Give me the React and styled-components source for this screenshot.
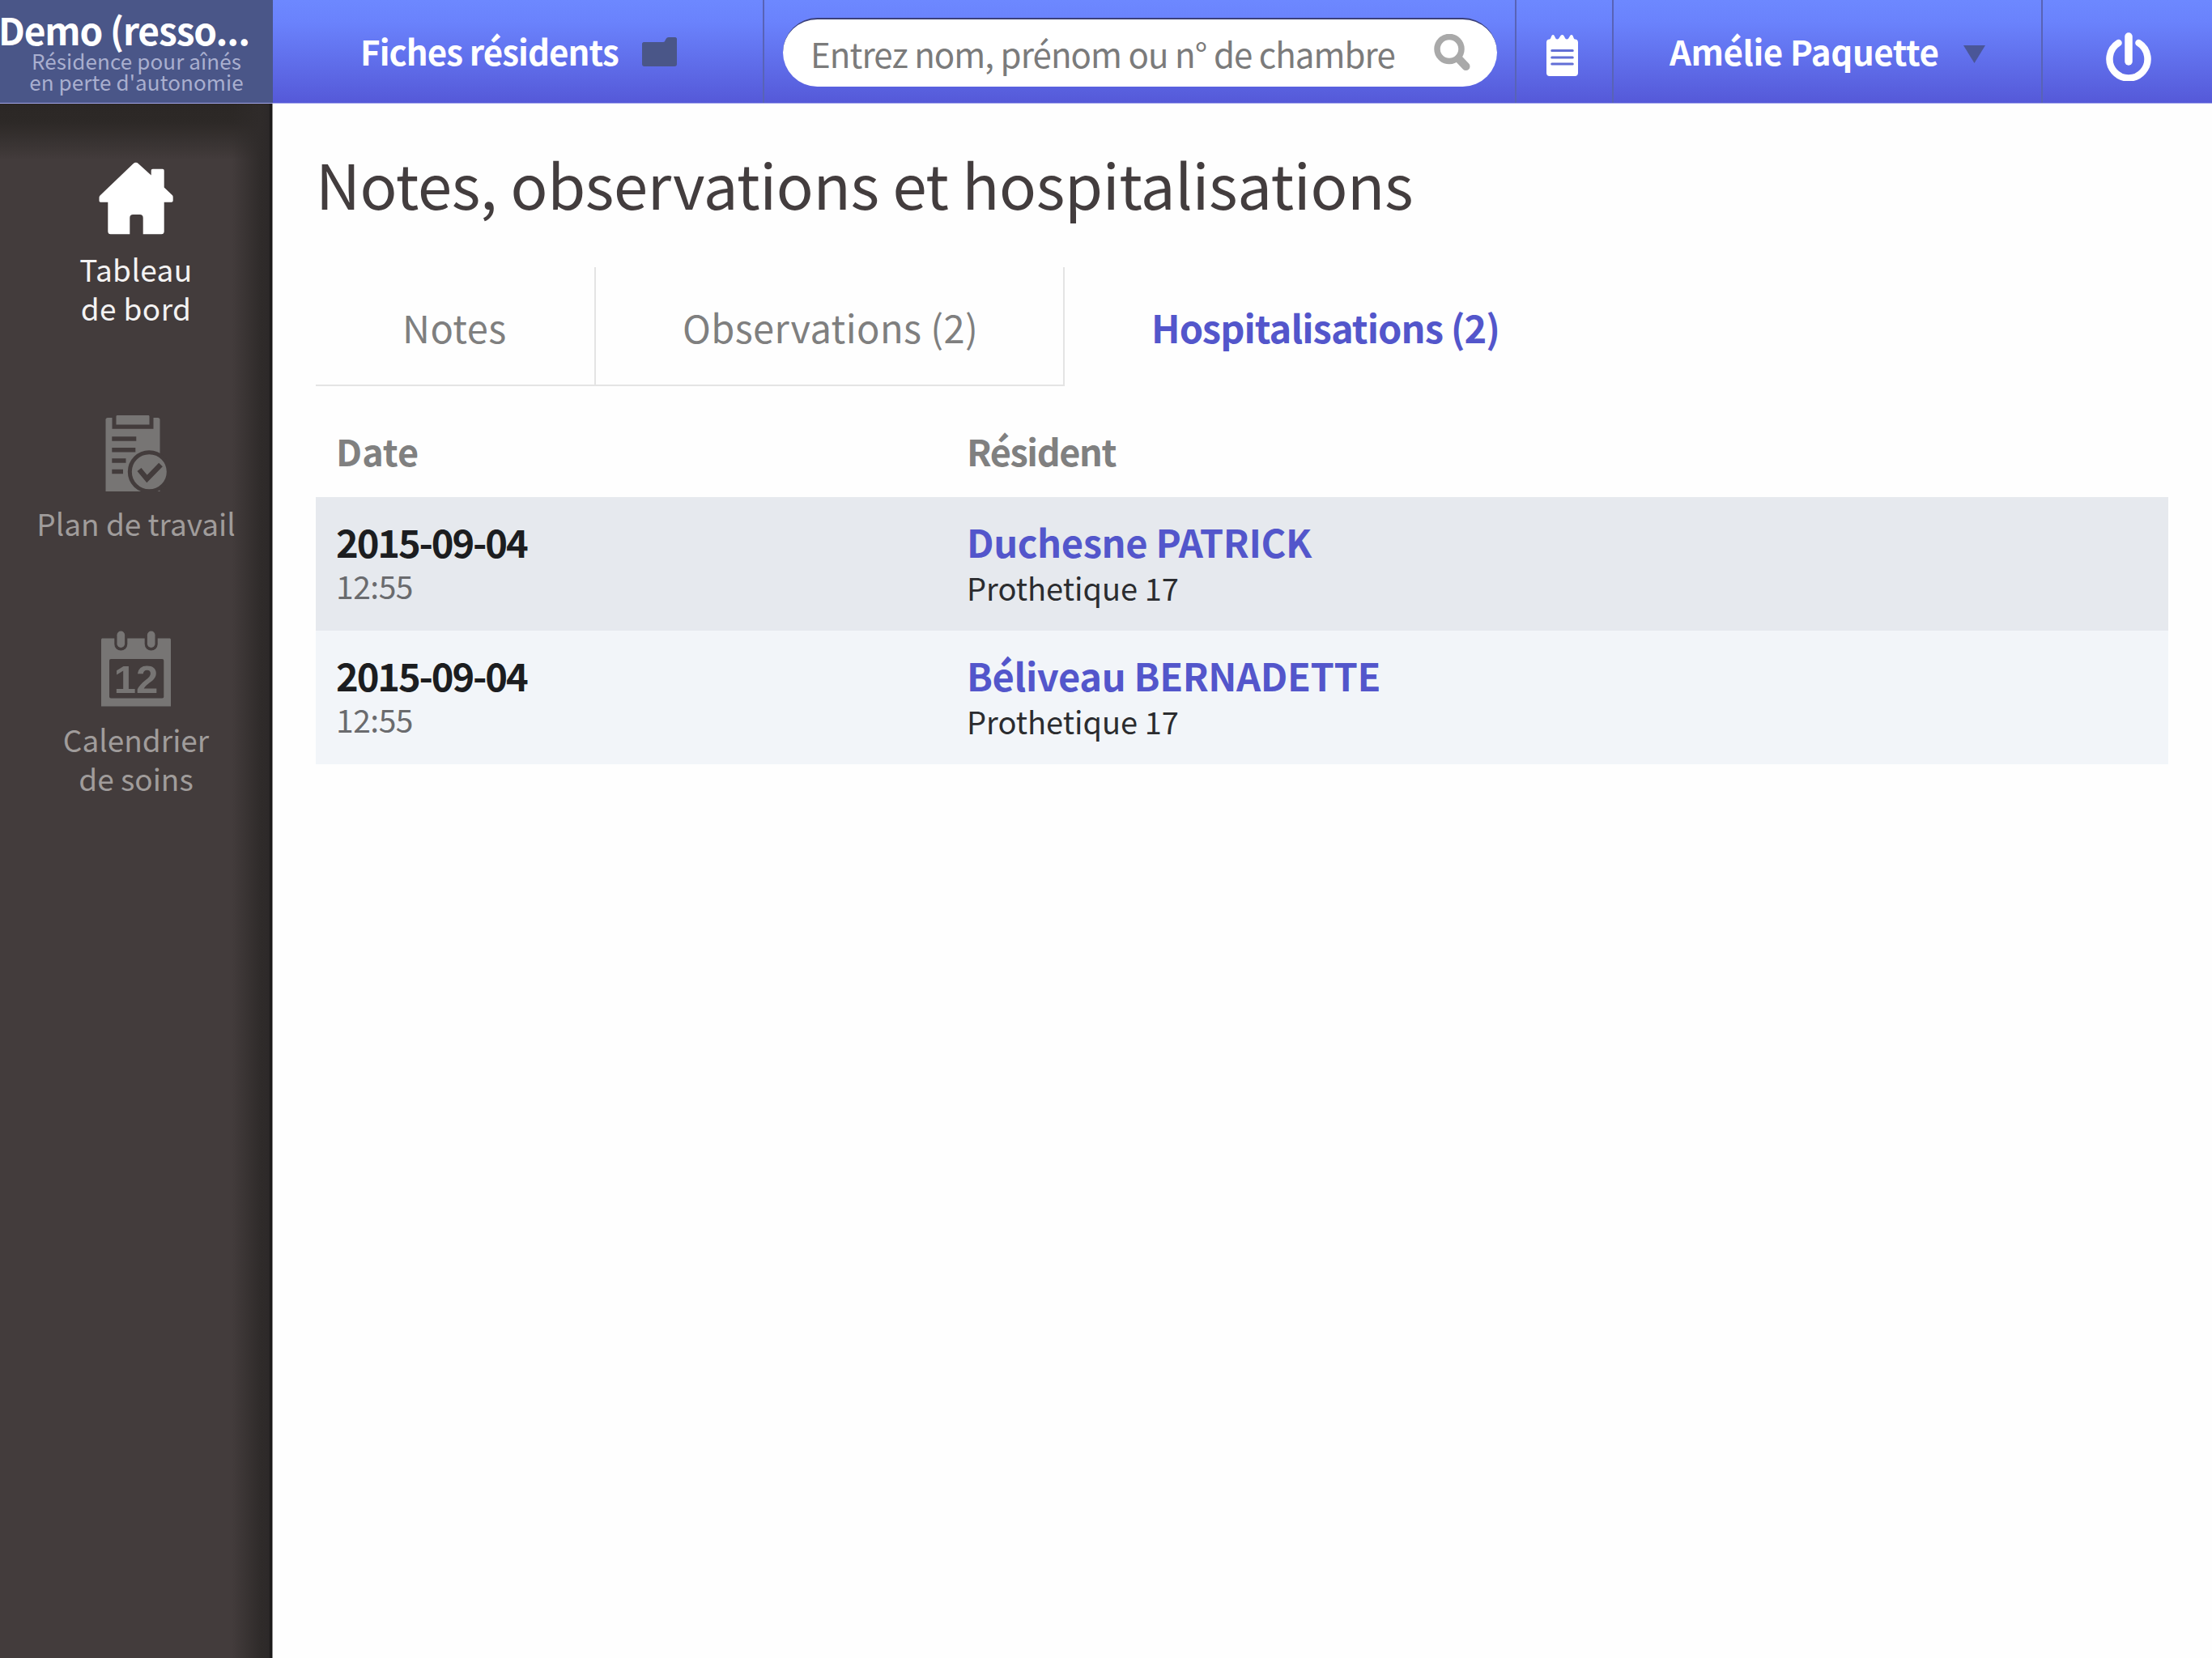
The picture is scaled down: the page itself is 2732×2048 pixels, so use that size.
import React, { useState } from 'react';
import styled, { createGlobalStyle } from 'styled-components';

const GlobalStyle = createGlobalStyle`
  * {
    box-sizing: border-box;
  }

  body {
    margin: 0;
    background: #fefefe;
    font-family: 'Noto Sans CJK JP', 'Noto Sans', sans-serif;
  }
`;

const Page = styled.div`
  display: flex;
  flex-direction: column;
  height: 2048px;
  overflow: hidden;
`;

const Header = styled.header`
  display: flex;
  flex: none;
  height: 128px;
  border-bottom: 1px solid #a3a6ea;
  background: linear-gradient(#6d88ff, #6a82fc 22%, #5559d8);
`;

const Brand = styled.div`
  width: 337px;
  padding-top: 12px;
  background: #4a5688;
`;

const BrandName = styled.div`
  margin-left: -2px;
  color: #fff;
  font-size: 46px;
  font-weight: 700;
  line-height: 48px;
  letter-spacing: -1.1px;
  white-space: nowrap;
`;

const BrandInfo = styled.div`
  margin-top: 2px;
  color: #a9afcf;
  font-size: 26px;
  line-height: 26px;
  letter-spacing: 0.1px;
  text-align: center;
`;

const HeaderCell = styled.div`
  display: flex;
  align-items: center;
  width: ${(props) => props.$width};
  padding-top: ${(props) => props.$top || 0};
  padding-left: ${(props) => props.$left || 0};
  border-right: ${(props) => (props.$last ? 'none' : '2px solid #5863b6')};
`;

const HeaderLink = styled.a`
  margin-bottom: 2px;
  color: #fff;
  font-size: 42px;
  font-weight: 700;
  line-height: 60px;
  letter-spacing: ${(props) => props.$spacing};
  white-space: nowrap;
`;

const Search = styled.label`
  display: flex;
  align-items: center;
  justify-content: space-between;
  width: 882px;
  height: 85px;
  margin-top: 1px;
  padding: 0 32px 0 34px;
  border-top: 2px solid #3b4079;
  border-radius: 43px;
  background: #fff;
`;

const SearchInput = styled.input`
  flex: 1;
  min-width: 0;
  height: 60px;
  padding: 0;
  border: none;
  outline: none;
  background: none;
  font-family: inherit;
  font-size: 42px;
  letter-spacing: -0.93px;

  &::placeholder {
    color: #7b7b7b;
    opacity: 1;
  }
`;

const Body = styled.div`
  display: flex;
  flex: 1;
`;

const Sidebar = styled.nav`
  display: flex;
  flex-direction: column;
  align-items: center;
  gap: 109px;
  width: 337px;
  padding-top: 72px;
  border-right: 1px solid #8d8b8b;
  background:
    linear-gradient(to left, #1c1a1a 2px, #2d2929 4px, #2f2b2a 14px, rgba(47, 43, 42, 0) 50px),
    linear-gradient(#2b2725, #2d2927 24px, rgba(45, 41, 39, 0) 70px),
    #433c3c;
`;

const SidebarItem = styled.a`
  display: flex;
  flex-direction: column;
  align-items: center;
  gap: ${(props) => props.$gap};
  color: ${(props) => (props.$active ? '#fff' : '#777574')};
`;

const SidebarLabel = styled.span`
  color: ${(props) => (props.$active ? '#f4f3f3' : '#a09c9b')};
  font-size: 37px;
  line-height: 48px;
  letter-spacing: ${(props) => (props.$active ? '0.4px' : '0')};
  text-align: center;
  white-space: pre-line;
`;

const Main = styled.main`
  flex: 1;
  padding: 52px 54px 0 53px;
`;

const Title = styled.h1`
  margin: 0;
  color: #433d3e;
  font-size: 76px;
  font-weight: 400;
  line-height: 92px;
  letter-spacing: -0.35px;
`;

const Tabs = styled.div`
  display: flex;
  height: 147px;
  margin-top: 58px;
`;

const Tab = styled.button`
  display: flex;
  align-items: center;
  width: ${(props) => props.$width};
  padding: 2px 0 0 107px;
  border: solid #e4e4e4;
  border-width: ${(props) => (props.$active ? '0 0 2px' : '0 2px 2px 0')};
  border-bottom-color: ${(props) => (props.$active ? 'transparent' : '#e4e4e4')};
  background: none;
  color: ${(props) => (props.$active ? '#5356cb' : '#7f7f7f')};
  font-family: inherit;
  font-size: 47px;
  font-weight: ${(props) => (props.$active ? 700 : 400)};
  line-height: 60px;
  letter-spacing: ${(props) => (props.$active ? '-0.95px' : '0.4px')};
  white-space: nowrap;
`;

const TableHead = styled.div`
  display: grid;
  grid-template-columns: 779px 1fr;
  height: 137px;
  padding: 45px 0 0 25px;
  color: #808080;
  font-size: 45px;
  font-weight: 700;
  line-height: 70px;
`;

const HeadCell = styled.div`
  letter-spacing: ${(props) => (props.$tight ? '-1.4px' : '0')};
`;

const Row = styled.div`
  display: grid;
  grid-template-columns: 779px 1fr;
  height: 165px;
  padding: 25px 0 0 25px;
  background: #e6e9ee;

  &:nth-child(odd) {
    background: #f2f5f9;
  }
`;

const RowDate = styled.div`
  color: #1c1d20;
  font-size: 47px;
  font-weight: 700;
  line-height: 60px;
  letter-spacing: -2.1px;
`;

const RowTime = styled.div`
  color: #6a6b6e;
  font-size: 39px;
  line-height: 48px;
  letter-spacing: -0.5px;
`;

const RowName = styled.div`
  color: #5356cb;
  font-size: 47px;
  font-weight: 700;
  line-height: 60px;
  letter-spacing: -0.4px;
`;

const RowRoom = styled.div`
  padding-top: 3px;
  color: #2b2c2f;
  font-size: 38px;
  line-height: 48px;
`;

const FolderIcon = () => (
  <svg width="43" height="36" viewBox="0 0 43 36">
    <path d="M2 6h24c2 0 2-1 3-3s2-3 4-3h8c1 0 2 1 2 2v31c0 2-1 3-3 3H3c-2 0-3-1-3-3V8c0-1 1-2 2-2z" fill="#4a5688" />
  </svg>
);

const SearchIcon = () => (
  <svg width="46" height="46" viewBox="0 0 46 46" fill="none" stroke="#a9a9a9">
    <circle cx="19" cy="18.5" r="15" strokeWidth="7.5" />
    <path d="M31 31l8.500 9" strokeWidth="10" strokeLinecap="round" />
  </svg>
);

const NotepadIcon = () => (
  <svg width="39" height="51" viewBox="0 0 41 51" preserveAspectRatio="none">
    <path
      d="M4 5.500C6 5.500 6 0 8.500 0S11 5.500 14 5.500 17.500 0 20.500 0 23.500 5.500 26.500 5.500 30 0 32.500 0 35 5.500 37 5.500c2.500 0 4 1.500 4 4V47c0 2.500-1.500 4-4 4H4c-2.500 0-4-1.500-4-4V9.500c0-2.500 1.500-4 4-4z"
      fill="#fff"
    />
    <path d="M7 19.500h27M7 28h27M7 36h27" stroke="#626fd6" strokeWidth="3" strokeLinecap="round" />
  </svg>
);

const ArrowIcon = () => (
  <svg width="27" height="22" viewBox="0 0 27 22">
    <path d="M0 0h27L13.500 22z" fill="#4a5698" />
  </svg>
);

const PowerIcon = () => (
  <svg width="56" height="60" viewBox="0 0 56 60" fill="none" stroke="#fff" strokeLinecap="round">
    <path d="M15.500 13A23.500 23.500 0 1 0 40.500 13" strokeWidth="8.500" />
    <path d="M28 5v31" strokeWidth="9.500" />
  </svg>
);

const HomeIcon = () => (
  <svg width="92" height="90" viewBox="0 0 92 90">
    <path
      d="M42.500 2.200C44.500.3 47 .3 49 2.200L64.700 16.500V11c0-1.500.7-2.200 2-2.200h12c1.300 0 2 .7 2 2.200v20.500l10 9.500c.8.800 1 1.500 1 2.500v4c0 1.500-.8 2.200-2 2.200h-9V86c0 2-1.300 3.300-3.300 3.300H54.700V69c0-2.500-1.500-4-4-4h-8.400c-2.500 0-4 1.500-4 4v20.300H14.600c-2 0-3.300-1.300-3.300-3.300V49.700h-9C1 49.700.5 49 .5 47.500v-3c0-1.200.3-2.200 1.300-3.200z"
      fill="currentColor"
    />
  </svg>
);

const PlanIcon = () => (
  <svg width="76" height="95" viewBox="0 0 76 95" fill="none" stroke="#433c3c">
    <path d="M3 3h62c1.500 0 2.500 1 2.500 2.500V94H.5V5.500C.5 4 1.500 3 3 3z" fill="currentColor" stroke="none" />
    <path d="M8.500 0h51v16.700h-51z" fill="#433c3c" stroke="none" />
    <path d="M15 0h38c1 0 1.500.5 1.500 1.500v10h-41v-10C13.500.5 14 0 15 0z" fill="currentColor" stroke="none" />
    <path d="M8.300 29h30M8.300 42.700h29M8.300 56h17.200M8.300 69.500H22" strokeWidth="5.500" />
    <circle cx="54.300" cy="69.700" r="24" fill="currentColor" strokeWidth="5" />
    <path d="M42 67l9.500 11.500L68.500 61" strokeWidth="6.500" />
  </svg>
);

const CalendarIcon = () => (
  <svg width="86" height="94" viewBox="0 0 86 94" fill="currentColor">
    <path d="M2 9.500h82c1.500 0 2 .5 2 2v82H0v-82c0-1.500.5-2 2-2z" />
    <rect x="16.300" y="-4" width="16" height="28.500" rx="8" fill="#433c3c" />
    <rect x="53.700" y="-4" width="16" height="28.500" rx="8" fill="#433c3c" />
    <rect x="19.500" y="0.500" width="9.600" height="20.500" rx="4.800" />
    <rect x="56.900" y="0.500" width="9.600" height="20.500" rx="4.800" />
    <rect x="10" y="35" width="67.300" height="48.500" rx="2" fill="#433c3c" />
    <text x="43" y="77.300" textAnchor="middle" fontFamily="'Liberation Sans', sans-serif" fontWeight="700" fontSize="49">
      12
    </text>
  </svg>
);

const menu = [
  { label: 'Tableau\nde bord', icon: HomeIcon, gap: '18px', active: true },
  { label: 'Plan de travail', icon: PlanIcon, gap: '14px' },
  { label: 'Calendrier\nde soins', icon: CalendarIcon, gap: '16px' },
];

const tabs = [
  { id: 'notes', label: 'Notes', width: '346px' },
  { id: 'observations', label: 'Observations (2)', width: '579px' },
  { id: 'hospitalisations', label: 'Hospitalisations (2)', width: '640px' },
];

const rows = [
  { date: '2015-09-04', time: '12:55', name: 'Duchesne PATRICK', room: 'Prothetique 17' },
  { date: '2015-09-04', time: '12:55', name: 'Béliveau BERNADETTE', room: 'Prothetique 17' },
];

const App = () => {
  const [tab, setTab] = useState('hospitalisations');

  return (
    <Page>
      <GlobalStyle />
      <Header>
        <Brand>
          <BrandName>Demo (resso...</BrandName>
          <BrandInfo>
            Résidence pour aînés
            <br />
            en perte d'autonomie
          </BrandInfo>
        </Brand>
        <HeaderCell $width="607px" $left="108px">
          <HeaderLink $spacing="-0.9px">Fiches résidents</HeaderLink>
          <HeaderCell $left="29px" $last>
            <FolderIcon />
          </HeaderCell>
        </HeaderCell>
        <HeaderCell $width="929px" $left="23px">
          <Search>
            <SearchInput placeholder="Entrez nom, prénom ou n° de chambre" />
            <SearchIcon />
          </Search>
        </HeaderCell>
        <HeaderCell $width="120px" $left="37px" $top="10px">
          <NotepadIcon />
        </HeaderCell>
        <HeaderCell $width="530px" $left="69px">
          <HeaderLink $spacing="-0.4px">Amélie Paquette</HeaderLink>
          <HeaderCell $left="30px" $top="6px" $last>
            <ArrowIcon />
          </HeaderCell>
        </HeaderCell>
        <HeaderCell $width="209px" $left="78px" $top="12px" $last>
          <PowerIcon />
        </HeaderCell>
      </Header>
      <Body>
        <Sidebar>
          {menu.map(({ label, icon: Icon, gap, active }) => (
            <SidebarItem key={label} $gap={gap} $active={active}>
              <Icon />
              <SidebarLabel $active={active}>{label}</SidebarLabel>
            </SidebarItem>
          ))}
        </Sidebar>
        <Main>
          <Title>Notes, observations et hospitalisations</Title>
          <Tabs>
            {tabs.map(({ id, label, width }) => (
              <Tab key={id} $width={width} $active={id === tab} onClick={() => setTab(id)}>
                {label}
              </Tab>
            ))}
          </Tabs>
          <div>
            <TableHead>
              <HeadCell>Date</HeadCell>
              <HeadCell $tight>Résident</HeadCell>
            </TableHead>
            {rows.map((row) => (
              <Row key={row.name}>
                <div>
                  <RowDate>{row.date}</RowDate>
                  <RowTime>{row.time}</RowTime>
                </div>
                <div>
                  <RowName>{row.name}</RowName>
                  <RowRoom>{row.room}</RowRoom>
                </div>
              </Row>
            ))}
          </div>
        </Main>
      </Body>
    </Page>
  );
};

export default App;
